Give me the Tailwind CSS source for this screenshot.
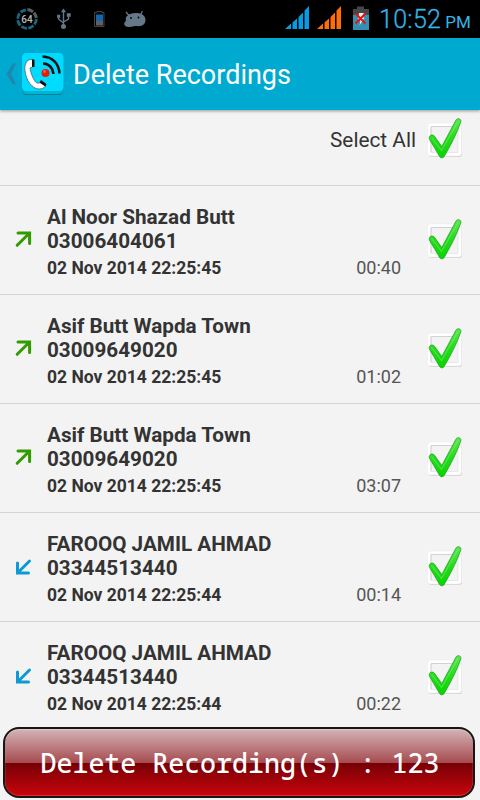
<!DOCTYPE html>
<html lang="en">
<head>
    <meta charset="UTF-8" />
    <meta name="viewport" content="width=device-width, initial-scale=1.0" />
    <title>Delete Recordings</title>
    <script src="https://cdn.jsdelivr.net/npm/@tailwindcss/browser@4"></script>
</head>
<body class="bg-[#f3f3f3] font-['Roboto',sans-serif] text-[#333]">
    <!-- Shared icons -->
    <svg class="absolute w-0 h-0">
        <defs>
            <linearGradient id="tickFill" x1="0" y1="0" x2="0" y2="1">
                <stop offset="0" stop-color="#5be650" />
                <stop offset="0.5" stop-color="#25dc1c" />
                <stop offset="1" stop-color="#08d400" />
            </linearGradient>
        </defs>
        <symbol id="check" viewBox="0 0 40 44">
            <rect x="3.5" y="8" width="33.5" height="33" rx="3" fill="#d2d2d2" />
            <rect x="2.5" y="7" width="34" height="33" rx="3" fill="#fff" stroke="#ececec" stroke-width="0.6" />
            <rect x="6" y="10.5" width="27" height="26" fill="#f3f3f3" stroke="#e4e4e4" stroke-width="0.8" />
            <path d="M6 11V36M6 10.5H27" stroke="#d2d2d2" fill="none" />
            <path d="M4.5 20.5C5.5 18.5 8.500 18.600 9.700 20.500L16.800 30.500L31 4C32.300 1.800 36.500 2.400 35.900 5.700C32 17.500 25 30.500 19.300 40.300C18.300 42.300 15.500 42.300 14.400 40.300C11.500 35 7.500 28.500 4.500 23.500C4 22.500 4 21.500 4.500 20.500Z" fill="url(#tickFill)" stroke="#1c9c1c" stroke-width="0.7" />
            <path d="M6.5 21.5L16.500 34.500L33 5.500" fill="none" stroke="#8bf582" stroke-width="1.2" opacity="0.45" />
        </symbol>
        <symbol id="outgoing" viewBox="0 0 18 18">
            <path d="M3 3H14.6V13.500M14.300 3.300L2.200 15.300" fill="none" stroke="#339a00" stroke-width="3" stroke-linecap="round" stroke-linejoin="miter" />
        </symbol>
        <symbol id="incoming" viewBox="0 0 18 18">
            <path d="M2.5 6V16H13.500M3 15.500L14.500 4" fill="none" stroke="#0d9ad4" stroke-width="3" stroke-linecap="round" />
        </symbol>
    </svg>

    <div class="w-[480px] h-[800px] flex flex-col overflow-hidden">
        <!-- Status bar -->
        <div class="h-[38px] shrink-0 bg-black flex items-center">
            <svg class="w-40 h-[38px]" viewBox="0 0 160 38">
                <circle cx="27" cy="19" r="9.3" fill="none" stroke="#1c6480" stroke-width="2.8" stroke-dasharray="5.9 1.4" />
                <path d="M28 9.7A9.3 9.3 0 0 1 36.3 18" fill="none" stroke="#5c5c5c" stroke-width="2.8" stroke-dasharray="5.5 1.4" />
                <text x="27" y="22.8" text-anchor="middle" font-family="Roboto" font-size="10" font-weight="500" fill="#bbb">64</text>
                <g fill="none" stroke="#64788a" stroke-width="1.4">
                    <path d="M63.5 11V27M58.5 16V19L63.5 23M68.5 15V19L63.5 22" />
                    <circle cx="63.5" cy="26.5" r="1.8" fill="#64788a" />
                    <path d="M62.3 11.5L63.5 9.8L64.7 11.5ZM67.5 14H70V16H67.5ZM57.8 15.5H59.5V17H57.8Z" fill="#64788a" />
                </g>
                <path d="M97 11.5H102V12.5H104V26.5H94.5V12.5H97Z" fill="#050505" stroke="#444" />
                <path d="M96 14.5H103V21H96Z" fill="#1565ad" />
                <path d="M96 21H103V25.5H96Z" fill="#606060" />
                <path d="M126 12L129 15.5M142.500 11L140 15.500" stroke="#64788a" stroke-width="1.3" />
                <path d="M127 16C130 12.500 139 12 143 15C147 18 146 24 142 25.500C139 27 136.500 25.600 134 26.200C130 27.500 124 27.500 124.300 23.500C124.500 22 125.500 21.500 126 20.500C125.300 19 126 17 127 16Z" fill="#64788a" />
                <circle cx="131" cy="18" r="0.9" /><circle cx="138.5" cy="17.5" r="0.9" />
            </svg>
            <svg class="ml-[125px] w-[84px] h-[38px]" viewBox="0 0 84 38">
                <path d="M0 29L6 23.500V29ZM7.500 29V22.500L12 18.500V29ZM13.500 29V17L18 12.500V29ZM19.500 29V10.500L24 6V29Z" fill="#079be3" />
                <path d="M32 29L38 23.500V29ZM39.500 29V22.500L44 18.500V29ZM45.500 29V17L50 12.500V29ZM51.500 29V10.500L56 6V29Z" fill="#ff6d0b" />
                <path d="M68 9H72V6.5H79V9H84V14.5H68Z" fill="#464646" />
                <path d="M68 14.5H84V30H68Z" fill="#3490b3" />
                <path d="M74 13H79L77 17.5H79.5L74.5 25.5L75.5 20H73Z" fill="#eee" />
                <path d="M70.5 13.5L80.5 23.5M80.5 13.5L70.5 23.5" stroke="#f00b0b" stroke-width="1.8" />
            </svg>
            <div class="ml-[10px] mt-[4px] text-[#33b5e5] whitespace-nowrap leading-[38px] flex items-baseline">
                <span class="text-[25px] font-light tracking-[0.3px] [-webkit-text-stroke:0.3px_#33b5e5]">10:52</span><span class="ml-[4px] text-[17px]">PM</span>
            </div>
        </div>

        <!-- Action bar -->
        <header class="h-[72px] shrink-0 bg-[#00a9d0] flex items-center relative shadow-[0_1px_3px_rgba(0,0,0,0.4)]">
            <svg class="ml-[6px] w-[10px] h-[22px]" viewBox="0 0 10 22">
                <path d="M7 0.5H10L5 11L10 21.5H7L0.5 11Z" fill="#2385ad" />
            </svg>
            <svg class="ml-[6px] w-[42px] h-[44px]" viewBox="0 0 42 44">
                <rect y="2" width="41.5" height="41" rx="4.5" fill="#087f9b" />
                <rect y="1" width="41.5" height="41" rx="4.5" fill="#00b4d2" />
                <rect y="1" width="41.5" height="38" rx="4.5" fill="#00dcff" />
                <path d="M10.5 7.5C5 6.5 2 12 3 19C4 28 10 37 17 37C20 37 22 36 23.5 34L18 30.5C16 32 14 31 12.5 28.5C10 24.5 8.5 20 8 16L10.5 15Z" fill="#fff" stroke="#465057" stroke-width="0.7" />
                <path d="M10 7.5H12.5V15H10ZM19 28L24.5 32L23.5 34.500L17.500 30.500Z" fill="#111" />
                <path d="M20.5 4.500C31 5 37 12 37.500 21.500M21 11.500C27 11.500 31 16 31.500 22" fill="none" stroke="#071014" stroke-width="2.6" />
                <circle cx="23.5" cy="21" r="4" fill="#e41d08" />
                <circle cx="22.5" cy="19.5" r="1.4" fill="#f4604d" />
            </svg>
            <h1 class="ml-[9px] mt-[2px] text-[27px] text-white whitespace-nowrap">Delete Recordings</h1>
        </header>

        <!-- Select all -->
        <div class="h-[76px] shrink-0 border-b border-[#d5d5d5] flex items-start justify-end pr-[15px] pt-[6px]">
            <span class="mr-[9px] mt-[8px] text-[20.8px] leading-[32px]">Select All</span>
            <svg class="w-10 h-11"><use href="#check" /></svg>
        </div>

        <!-- Recordings -->
        <ul class="h-[539px] shrink-0 overflow-hidden">
            <li class="h-[109px] border-b border-[#d5d5d5] flex pr-[15px]">
                <svg class="ml-[15px] mt-[44px] w-[18px] h-[18px]"><use href="#outgoing" /></svg>
                <div class="ml-[14px] mt-[19px] flex-1 font-bold text-[20.7px] leading-6">
                    <p>Al Noor Shazad Butt</p>
                    <p>03006404061</p>
                    <p class="mt-[3px] text-[17.5px] leading-6">02 Nov 2014 22:25:45</p>
                </div>
                <span class="mt-[70px] mr-6 text-[18px] leading-6 text-[#555]">00:40</span>
                <svg class="mt-[31px] w-10 h-11"><use href="#check" /></svg>
            </li>
            <li class="h-[109px] border-b border-[#d5d5d5] flex pr-[15px]">
                <svg class="ml-[15px] mt-[44px] w-[18px] h-[18px]"><use href="#outgoing" /></svg>
                <div class="ml-[14px] mt-[19px] flex-1 font-bold text-[20.7px] leading-6">
                    <p>Asif Butt Wapda Town</p>
                    <p>03009649020</p>
                    <p class="mt-[3px] text-[17.5px] leading-6">02 Nov 2014 22:25:45</p>
                </div>
                <span class="mt-[70px] mr-6 text-[18px] leading-6 text-[#555]">01:02</span>
                <svg class="mt-[31px] w-10 h-11"><use href="#check" /></svg>
            </li>
            <li class="h-[109px] border-b border-[#d5d5d5] flex pr-[15px]">
                <svg class="ml-[15px] mt-[44px] w-[18px] h-[18px]"><use href="#outgoing" /></svg>
                <div class="ml-[14px] mt-[19px] flex-1 font-bold text-[20.7px] leading-6">
                    <p>Asif Butt Wapda Town</p>
                    <p>03009649020</p>
                    <p class="mt-[3px] text-[17.5px] leading-6">02 Nov 2014 22:25:45</p>
                </div>
                <span class="mt-[70px] mr-6 text-[18px] leading-6 text-[#555]">03:07</span>
                <svg class="mt-[31px] w-10 h-11"><use href="#check" /></svg>
            </li>
            <li class="h-[109px] border-b border-[#d5d5d5] flex pr-[15px]">
                <svg class="ml-[15px] mt-[44px] w-[18px] h-[18px]"><use href="#incoming" /></svg>
                <div class="ml-[14px] mt-[19px] flex-1 font-bold text-[20.7px] leading-6">
                    <p>FAROOQ JAMIL AHMAD</p>
                    <p>03344513440</p>
                    <p class="mt-[3px] text-[17.5px] leading-6">02 Nov 2014 22:25:44</p>
                </div>
                <span class="mt-[70px] mr-6 text-[18px] leading-6 text-[#555]">00:14</span>
                <svg class="mt-[31px] w-10 h-11"><use href="#check" /></svg>
            </li>
            <li class="h-[109px] flex pr-[15px]">
                <svg class="ml-[15px] mt-[44px] w-[18px] h-[18px]"><use href="#incoming" /></svg>
                <div class="ml-[14px] mt-[19px] flex-1 font-bold text-[20.7px] leading-6">
                    <p>FAROOQ JAMIL AHMAD</p>
                    <p>03344513440</p>
                    <p class="mt-[3px] text-[17.5px] leading-6">02 Nov 2014 22:25:44</p>
                </div>
                <span class="mt-[70px] mr-6 text-[18px] leading-6 text-[#555]">00:22</span>
                <svg class="mt-[31px] w-10 h-11"><use href="#check" /></svg>
            </li>
        </ul>

        <!-- Delete button -->
        <button class="ml-[3px] mt-[2px] w-[472px] h-[71px] shrink-0 rounded-2xl border-2 border-[#161616] bg-linear-[180deg,#d3b4b7_0%,#a74c50_50%,#740005_50%,#c8050c_100%] shadow-[inset_0_1px_1px_#e0c9ca,inset_0_-1px_1px_#e12d30] text-white text-[26.6px] font-medium font-['Noto_Sans_Mono','DejaVu_Sans_Mono',monospace] whitespace-nowrap pl-[2px] pt-[2px]">Delete Recording(s) : 123</button>
    </div>
</body>
</html>
